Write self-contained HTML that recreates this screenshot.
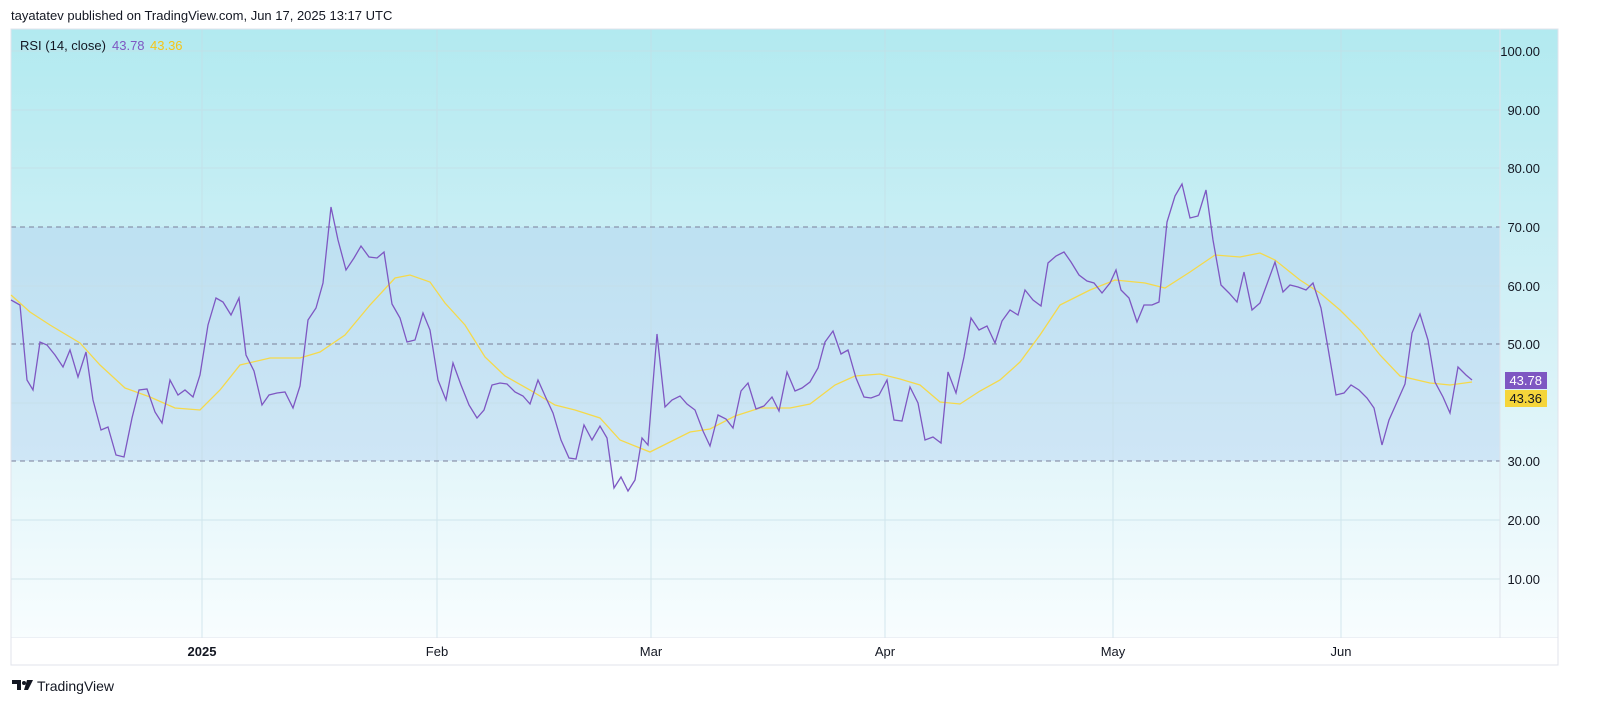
<!DOCTYPE html>
<html><head><meta charset="utf-8"><style>
html,body{margin:0;padding:0;background:#fff;width:1600px;height:718px;overflow:hidden;font-family:"Liberation Sans",sans-serif}
</style></head><body>
<svg width="1600" height="718" xmlns="http://www.w3.org/2000/svg" font-family="Liberation Sans, sans-serif">
<defs>
<linearGradient id="bg" x1="0" y1="0" x2="0" y2="1">
<stop offset="0" stop-color="#b2eaf0"/><stop offset="0.45" stop-color="#d2f0f6"/><stop offset="1" stop-color="#fbfeff"/>
</linearGradient>
</defs>
<text x="11" y="20" font-size="13" fill="#131722">tayatatev published on TradingView.com, Jun 17, 2025 13:17 UTC</text>
<rect x="11" y="29" width="1547" height="636" fill="url(#bg)"/>
<rect x="11" y="227" width="1489" height="234" fill="#a8c8ee" opacity="0.35"/>
<g stroke="#c5dde6" stroke-width="1" opacity="0.7">
<line x1="202" y1="29" x2="202" y2="638"/><line x1="437" y1="29" x2="437" y2="638"/><line x1="651" y1="29" x2="651" y2="638"/><line x1="885" y1="29" x2="885" y2="638"/><line x1="1113" y1="29" x2="1113" y2="638"/><line x1="1341" y1="29" x2="1341" y2="638"/>
<line x1="11" y1="51" x2="1500" y2="51"/><line x1="11" y1="110" x2="1500" y2="110"/><line x1="11" y1="168" x2="1500" y2="168"/><line x1="11" y1="286" x2="1500" y2="286"/><line x1="11" y1="403" x2="1500" y2="403"/><line x1="11" y1="520" x2="1500" y2="520"/><line x1="11" y1="579" x2="1500" y2="579"/>
</g>
<g stroke="#7a7f99" stroke-width="1" stroke-dasharray="5,4">
<line x1="11" y1="227" x2="1500" y2="227"/><line x1="11" y1="344" x2="1500" y2="344"/><line x1="11" y1="461" x2="1500" y2="461"/>
</g>
<line x1="1500" y1="29" x2="1500" y2="665" stroke="#e0e3eb"/>
<line x1="11" y1="638" x2="1558" y2="638" stroke="#e0e3eb"/>
<rect x="11" y="638" width="1547" height="27" fill="#fff"/>
<rect x="11" y="29" width="1547" height="636" fill="none" stroke="#e0e3eb"/>
<polyline fill="none" stroke="#f5d94a" stroke-width="1.3" points="11,295 30,312 50,325 80,343 100,365 125,388 150,397 175,408 200,410 220,390 240,365 270,358 300,358 320,352 345,335 370,305 395,278 410,275 430,282 445,303 465,325 485,357 505,376 530,390 555,405 575,410 600,418 620,440 650,452 670,442 690,432 710,429 735,416 760,408 790,408 810,404 835,385 855,376 880,374 900,379 920,385 940,402 960,404 980,391 1000,380 1020,362 1040,335 1060,305 1090,290 1115,280 1145,283 1165,288 1190,272 1215,255 1240,257 1260,253 1275,260 1300,280 1320,293 1340,310 1360,330 1380,355 1400,376 1430,383 1450,385 1472,382"/>
<polyline fill="none" stroke="#7e57c2" stroke-width="1.3" points="11,300 20,305 27,380 33,390 40,342 47,345 55,355 63,367 70,350 78,377 86,352 93,400 101,430 108,427 116,455 124,457 132,418 139,390 147,389 155,412 162,423 170,380 178,395 185,390 193,397 200,375 208,325 216,298 223,302 231,315 239,298 246,355 254,371 262,405 269,395 277,393 285,392 293,408 300,386 308,320 316,308 323,283 331,207 338,240 346,270 354,258 361,246 369,257 377,258 384,252 392,304 400,318 407,342 415,340 423,313 430,330 438,380 446,400 453,363 461,385 469,405 477,418 484,410 492,385 500,383 507,384 515,392 523,396 530,404 538,380 546,398 553,413 561,440 569,458 576,459 584,425 592,440 600,426 607,438 614,488 621,477 628,491 635,480 642,438 648,445 657,334 665,407 672,400 680,396 687,404 695,410 703,431 710,446 718,415 726,419 733,428 741,391 748,383 756,409 764,406 772,397 779,411 787,372 795,391 802,388 810,382 818,368 825,342 833,331 841,354 848,350 856,378 864,397 871,398 879,395 887,380 894,420 902,421 910,387 918,403 925,440 933,437 941,443 948,372 956,393 964,357 971,318 979,330 987,326 995,343 1002,321 1010,310 1018,315 1025,290 1033,300 1041,306 1048,263 1056,256 1064,252 1071,262 1079,275 1087,281 1094,283 1102,293 1110,283 1116,270 1121,290 1129,298 1137,322 1144,305 1152,305 1159,302 1167,222 1175,196 1182,184 1190,218 1198,216 1206,190 1213,240 1221,285 1229,293 1237,302 1244,272 1252,310 1260,303 1267,284 1275,262 1283,292 1290,285 1298,287 1306,290 1313,283 1321,308 1328,348 1336,395 1344,393 1351,385 1359,390 1367,398 1374,408 1382,445 1389,420 1397,402 1405,384 1412,333 1420,314 1428,340 1435,382 1443,397 1450,413 1458,367 1466,375 1472,380"/>
<g font-size="13" fill="#131722" text-anchor="end">
<text x="1540" y="56">100.00</text><text x="1540" y="115">90.00</text><text x="1540" y="173">80.00</text><text x="1540" y="232">70.00</text><text x="1540" y="291">60.00</text><text x="1540" y="349">50.00</text><text x="1540" y="466">30.00</text><text x="1540" y="525">20.00</text><text x="1540" y="584">10.00</text>
</g>
<rect x="1505" y="372" width="42" height="17" fill="#7e57c2"/>
<text x="1542" y="385" font-size="13" fill="#fff" text-anchor="end">43.78</text>
<rect x="1505" y="390" width="42" height="17" fill="#f5d53a"/>
<text x="1542" y="403" font-size="13" fill="#131722" text-anchor="end">43.36</text>
<text x="20" y="50" font-size="13" fill="#131722">RSI (14, close)</text>
<text x="112" y="50" font-size="13" fill="#7e57c2">43.78</text>
<text x="150" y="50" font-size="13" fill="#f5c518">43.36</text>
<g font-size="13" fill="#131722" text-anchor="middle">
<text x="202" y="656" font-weight="bold">2025</text><text x="437" y="656">Feb</text><text x="651" y="656">Mar</text><text x="885" y="656">Apr</text><text x="1113" y="656">May</text><text x="1341" y="656">Jun</text>
</g>
<g fill="#131722">
<path d="M12 680h9v10h-4v-6h-5z"/><circle cx="24" cy="683" r="2"/><path d="M27 680h6l-5 10h-4z"/>
</g>
<text x="37" y="691" font-size="14" fill="#131722">TradingView</text>
</svg>
</body></html>
